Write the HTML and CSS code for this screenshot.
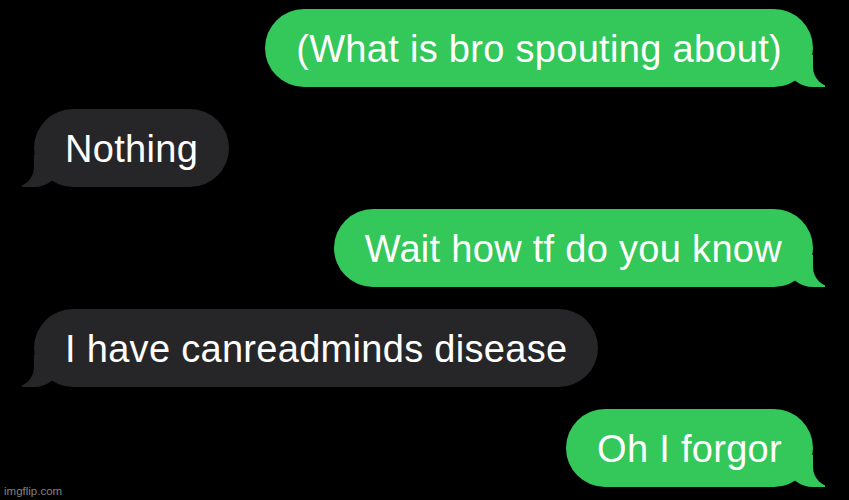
FILE: index.html
```html
<!DOCTYPE html>
<html lang="en">
<head>
    <meta charset="UTF-8">
    <meta name="viewport" content="width=device-width, initial-scale=1.0">
    <title>Messages</title>
    <link rel="stylesheet" href="styles.css">
</head>
<body>
    <div class="chat">
        <div class="msg sent">(What is bro spouting about)</div>
        <div class="msg received">Nothing</div>
        <div class="msg sent">Wait how tf do you know</div>
        <div class="msg received">I have canreadminds disease</div>
        <div class="msg sent">Oh I forgor</div>
    </div>
    <div class="watermark">imgflip.com</div>
</body>
</html>
```

FILE: styles.css
```css
* {
    margin: 0;
    padding: 0;
    box-sizing: border-box;
}

body {
    background: #000;
    font-family: "Liberation Sans", Arial, sans-serif;
    width: 849px;
    height: 500px;
    overflow: hidden;
    position: relative;
}

/* message list */
.chat {
    display: flex;
    flex-direction: column;
    gap: 22px;
    padding: 9px 36px 0 34px;
}

.msg {
    position: relative;
    height: 78px;
    padding: 3px 31px 0;
    line-height: 75px;
    font-size: 38px;
    letter-spacing: 0.3px;
    color: #fff;
    border-radius: 39px;
    white-space: nowrap;
}

.sent {
    align-self: flex-end;
    background: #34c759;
}

.received {
    align-self: flex-start;
    background: #262628;
}

/* bubble tails */
.msg::before,
.msg::after {
    content: "";
    position: absolute;
    bottom: 0;
    height: 32px;
}

.sent::before {
    right: -12px;
    width: 36px;
    background: #34c759;
    border-bottom-left-radius: 24px 20px;
}

.sent::after {
    right: -42px;
    width: 42px;
    background: #000;
    border-bottom-left-radius: 20px;
}

.received::before {
    left: -12px;
    width: 36px;
    background: #262628;
    border-bottom-right-radius: 24px 20px;
}

.received::after {
    left: -42px;
    width: 42px;
    background: #000;
    border-bottom-right-radius: 20px;
}

.watermark {
    position: absolute;
    left: 4px;
    bottom: 3px;
    font-size: 11.5px;
    color: rgba(255, 255, 255, 0.5);
}
```
